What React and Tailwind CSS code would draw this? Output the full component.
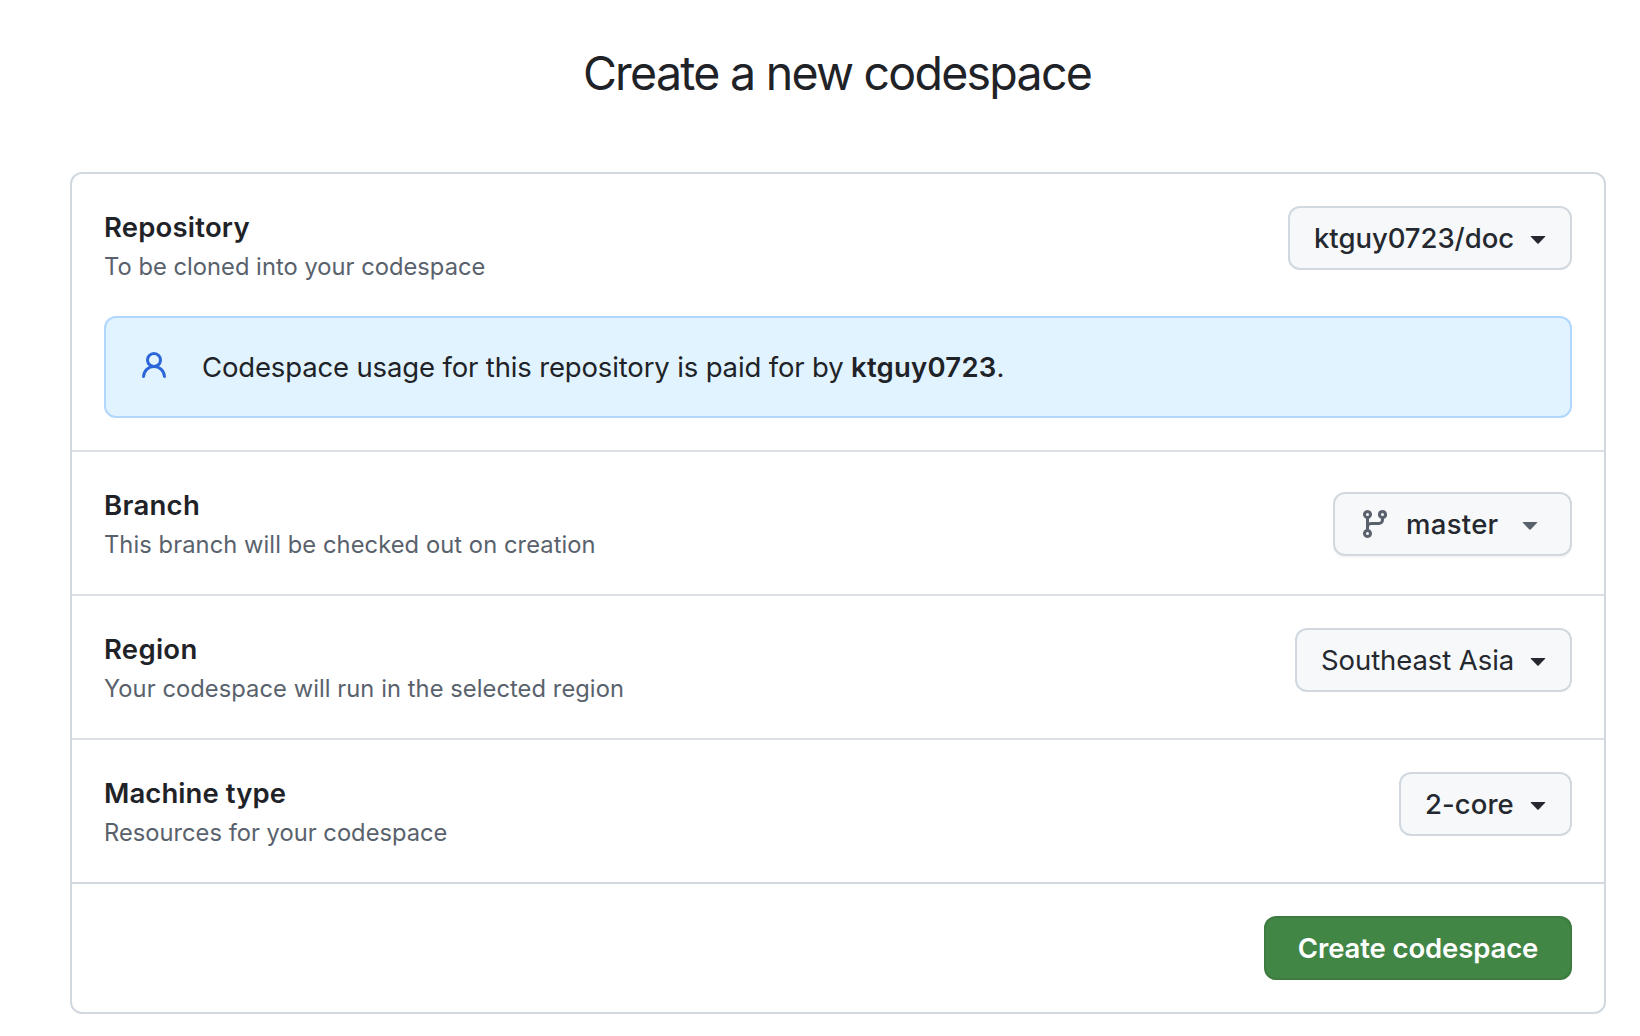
import React from "react";
import { clsx } from "clsx";

function Caret({ className }) {
  return (
    <svg viewBox="0 0 16 16" className={clsx("size-8 shrink-0 fill-current", className)} aria-hidden="true">
      <path d="M4.427 7.427l3.396 3.396a.25.25 0 00.354 0l3.396-3.396A.25.25 0 0011.396 7H4.604a.25.25 0 00-.177.427z" />
    </svg>
  );
}

function PersonIcon() {
  return (
    <svg viewBox="0 0 16 16" className="mb-[2px] size-8 shrink-0 fill-[#2b65d9]" aria-hidden="true">
      <path d="M10.561 8.073a6.005 6.005 0 0 1 3.432 5.142.75.75 0 1 1-1.498.07 4.5 4.5 0 0 0-8.99 0 .75.75 0 0 1-1.498-.07 6.004 6.004 0 0 1 3.431-5.142 3.999 3.999 0 1 1 5.123 0ZM10.5 5a2.5 2.5 0 1 0-5 0 2.5 2.5 0 0 0 5 0Z" />
    </svg>
  );
}

function BranchIcon() {
  return (
    <svg viewBox="0 0 16 16" className="size-8 shrink-0 fill-[#59626c]" aria-hidden="true">
      <path
        fillRule="evenodd"
        d="M11.75 2.5a.75.75 0 100 1.5.75.75 0 000-1.5zm-2.25.75a2.25 2.25 0 113 2.122V6A2.5 2.5 0 0110 8.5H6a1 1 0 00-1 1v1.128a2.251 2.251 0 11-1.5 0V5.372a2.25 2.25 0 111.5 0v1.836A2.492 2.492 0 016 7h4a1 1 0 001-1v-.628A2.25 2.25 0 019.5 3.25zM4.25 12a.75.75 0 100 1.5.75.75 0 000-1.5zM3.5 3.25a.75.75 0 111.5 0 .75.75 0 01-1.5 0z"
      />
    </svg>
  );
}

function SelectButton({ className, children }) {
  return (
    <button
      type="button"
      className={clsx(
        "flex h-16 shrink-0 items-center rounded-xl border-2 border-[#d1d8df] bg-[#f6f8fa] text-[27.5px] whitespace-nowrap text-[#25292f]",
        className,
      )}
    >
      {children}
    </button>
  );
}

function Label({ title, titleClass, detail, detailClass }) {
  return (
    <div>
      <h2 className={clsx("text-[27.5px] leading-[42px] font-semibold", titleClass)}>{title}</h2>
      <p className={clsx("mt-px -mb-px text-[23.7px] leading-9 text-[#59626c]", detailClass)}>{detail}</p>
    </div>
  );
}

export default function App() {
  return (
    <main className="h-[1036px] bg-white pt-[37px] pr-[34px] pl-[70px] font-[Inter,sans-serif] text-[#1f2328]">
      <h1 className="mr-[2px] mb-[63px] text-center text-[46.5px] leading-[72px] tracking-[-1.75px]">Create a new codespace</h1>

      <div className="rounded-xl border-2 border-[#d1d8df]">
        <section className="p-8">
          <div className="flex items-start justify-between">
            <Label
              title="Repository"
              titleClass="tracking-[0.2px]"
              detail="To be cloned into your codespace"
              detailClass="tracking-[0.03px]"
            />
            <SelectButton className="w-[284px] justify-between pr-4 pl-6 font-medium tracking-[-0.04px]">
              <span className="pt-[2px]">ktguy0723/doc</span>
              <Caret />
            </SelectButton>
          </div>
          <div className="mt-[32px] flex h-[102px] items-center rounded-xl border-2 border-[#b1d7fc] bg-[#e0f3ff] px-8">
            <PersonIcon />
            <p className="ml-8 pt-[2px] text-[27.5px] tracking-[-0.15px]">
              Codespace usage for this repository is paid for by{" "}
              <strong className="font-semibold tracking-[0.22px]">ktguy0723</strong>.
            </p>
          </div>
        </section>

        <section className="flex items-start justify-between border-t-2 border-[#dbe0e6] p-8">
          <Label
            title="Branch"
            titleClass="tracking-[0.3px]"
            detail="This branch will be checked out on creation"
            detailClass="tracking-[0.08px]"
          />
          <SelectButton className="mt-2 w-[239px] px-6 font-medium tracking-[0.3px] shadow-[0_2px_0_rgba(31,35,40,0.04)]">
            <BranchIcon />
            <span className="ml-[15px] pt-[2px]">master</span>
            <Caret className="ml-auto text-[#59626c]" />
          </SelectButton>
        </section>

        <section className="flex items-start justify-between border-t-2 border-[#dbe0e6] p-8">
          <Label
            title="Region"
            titleClass="tracking-[0.28px]"
            detail="Your codespace will run in the selected region"
            detailClass="tracking-[0.07px]"
          />
          <SelectButton className="w-[277px] justify-between pr-4 pl-6 tracking-[-0.08px]">
            <span className="pt-[2px]">Southeast Asia</span>
            <Caret />
          </SelectButton>
        </section>

        <section className="flex items-start justify-between border-t-2 border-[#dbe0e6] p-8">
          <Label
            title="Machine type"
            titleClass="tracking-[0.08px]"
            detail="Resources for your codespace"
            detailClass="tracking-[0.02px]"
          />
          <SelectButton className="w-[173px] justify-between pr-4 pl-6 font-medium tracking-[0.06px]">
            <span className="pt-[2px]">2-core</span>
            <Caret />
          </SelectButton>
        </section>

        <footer className="flex justify-end border-t-2 border-[#d1d8df] p-8">
          <button
            type="button"
            className="flex h-16 w-[308px] items-center justify-center rounded-xl border-2 border-[#3d7b41] bg-[#428646] pt-[2px] text-[27.5px] font-semibold tracking-[-0.12px] text-white"
          >
            Create codespace
          </button>
        </footer>
      </div>
    </main>
  );
}
